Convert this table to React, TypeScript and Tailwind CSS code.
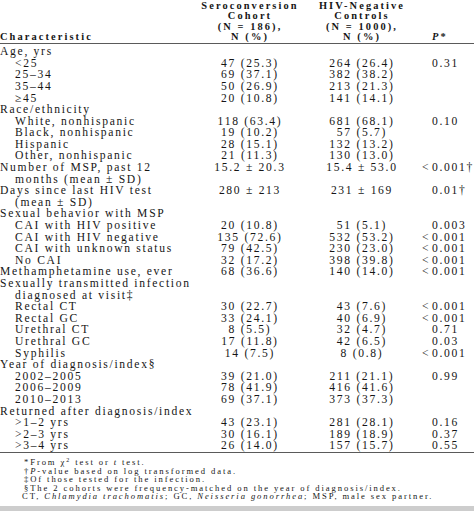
import type { ReactNode } from "react"

type Row = {
  label: ReactNode
  sub?: boolean
  cont?: string
  a?: string
  b?: string
  p?: string
}

const rows: Row[] = [
  { label: "Age, yrs" },
  { label: "<25", sub: true, a: "47 (25.3)", b: "264 (26.4)", p: "0.31" },
  { label: "25–34", sub: true, a: "69 (37.1)", b: "382 (38.2)" },
  { label: "35–44", sub: true, a: "50 (26.9)", b: "213 (21.3)" },
  { label: "≥45", sub: true, a: "20 (10.8)", b: "141 (14.1)" },
  { label: "Race/ethnicity" },
  { label: "White, nonhispanic", sub: true, a: "118 (63.4)", b: "681 (68.1)", p: "0.10" },
  { label: "Black, nonhispanic", sub: true, a: "19 (10.2)", b: "57 (5.7)" },
  { label: "Hispanic", sub: true, a: "28 (15.1)", b: "132 (13.2)" },
  { label: "Other, nonhispanic", sub: true, a: "21 (11.3)", b: "130 (13.0)" },
  {
    label: "Number of MSP, past 12",
    cont: "months (mean ± SD)",
    a: "15.2 ± 20.3",
    b: "15.4 ± 53.0",
    p: "<0.001†",
  },
  { label: "Days since last HIV test", cont: "(mean ± SD)", a: "280 ± 213", b: "231 ± 169", p: "0.01†" },
  { label: "Sexual behavior with MSP" },
  { label: "CAI with HIV positive", sub: true, a: "20 (10.8)", b: "51 (5.1)", p: "0.003" },
  { label: "CAI with HIV negative", sub: true, a: "135 (72.6)", b: "532 (53.2)", p: "<0.001" },
  { label: "CAI with unknown status", sub: true, a: "79 (42.5)", b: "230 (23.0)", p: "<0.001" },
  { label: "No CAI", sub: true, a: "32 (17.2)", b: "398 (39.8)", p: "<0.001" },
  { label: "Methamphetamine use, ever", a: "68 (36.6)", b: "140 (14.0)", p: "<0.001" },
  { label: "Sexually transmitted infection", cont: "diagnosed at visit‡" },
  { label: "Rectal CT", sub: true, a: "30 (22.7)", b: "43 (7.6)", p: "<0.001" },
  { label: "Rectal GC", sub: true, a: "33 (24.1)", b: "40 (6.9)", p: "<0.001" },
  { label: "Urethral CT", sub: true, a: "8 (5.5)", b: "32 (4.7)", p: "0.71" },
  { label: "Urethral GC", sub: true, a: "17 (11.8)", b: "42 (6.5)", p: "0.03" },
  { label: "Syphilis", sub: true, a: "14 (7.5)", b: "8 (0.8)", p: "<0.001" },
  { label: "Year of diagnosis/index§" },
  { label: "2002–2005", sub: true, a: "39 (21.0)", b: "211 (21.1)", p: "0.99" },
  { label: "2006–2009", sub: true, a: "78 (41.9)", b: "416 (41.6)" },
  { label: "2010–2013", sub: true, a: "69 (37.1)", b: "373 (37.3)" },
  { label: "Returned after diagnosis/index" },
  { label: ">1–2 yrs", sub: true, a: "43 (23.1)", b: "281 (28.1)", p: "0.16" },
  { label: ">2–3 yrs", sub: true, a: "30 (16.1)", b: "189 (18.9)", p: "0.37" },
  { label: ">3–4 yrs", sub: true, a: "26 (14.0)", b: "157 (15.7)", p: "0.55" },
]

function PValue({ value }: { value?: string }) {
  if (!value) return null
  if (value.startsWith("<")) {
    // the "<" hangs left so the decimals line up
    return (
      <span>
        <span className="-ml-[10px] inline-block w-[10px]">&lt;</span>
        {value.slice(1)}
      </span>
    )
  }
  return <span>{value}</span>
}

export default function App() {
  return (
    <div
      className="h-[517px] w-[474px] overflow-hidden bg-white text-[#161616]"
      style={{ fontFamily: '"Liberation Serif", "Times New Roman", serif' }}
    >
      {/* Header */}
      <div className="grid grid-cols-[195px_110px_114px_55px] items-end border-b border-[#5a5a5a] pt-px text-[10.4px] font-bold leading-[10.4px] tracking-[2.1px]">
        <div>Characteristic</div>
        <div className="text-center">
          <div>Seroconversion</div>
          <div>Cohort</div>
          <div>(N = 186),</div>
          <div>N (%)</div>
        </div>
        <div className="text-center">
          <div>HIV-Negative</div>
          <div>Controls</div>
          <div>(N = 1000),</div>
          <div>N (%)</div>
        </div>
        <div className="pl-[13px] italic">
          P<span className="not-italic">*</span>
        </div>
      </div>

      {/* Body */}
      <div className="border-b border-[#5a5a5a] pt-[2.5px] text-[11.6px] leading-[11.6px] tracking-[1.7px]">
        {rows.map((row, i) => (
          <div key={i} className="grid grid-cols-[195px_110px_114px_55px] items-start">
            <div className="whitespace-nowrap">
              <div className={row.sub ? "pl-[15px]" : ""}>{row.label}</div>
              {row.cont && <div className="pl-[15px]">{row.cont}</div>}
            </div>
            <div className="text-center whitespace-nowrap">{row.a}</div>
            <div className="text-center whitespace-nowrap">{row.b}</div>
            <div className="pl-[13px] whitespace-nowrap">
              <PValue value={row.p} />
            </div>
          </div>
        ))}
      </div>

      {/* Footnotes */}
      <div className="pl-[24px] pt-[5px] text-[8.6px] leading-[8.6px] tracking-[1.9px] whitespace-nowrap">
        <div>
          *From χ<sup className="text-[6px]">2</sup> test or <span className="italic">t</span> test.
        </div>
        <div>
          †<span className="italic">P</span>-value based on log transformed data.
        </div>
        <div>‡Of those tested for the infection.</div>
        <div>§The 2 cohorts were frequency-matched on the year of diagnosis/index.</div>
        <div className="-ml-[2px]">
          CT, <span className="italic">Chlamydia trachomatis</span>; GC,{" "}
          <span className="italic">Neisseria gonorrhea</span>; MSP, male sex partner.
        </div>
      </div>
      <div className="mt-[5px] h-[5px] bg-[#cdcdcd]" />
    </div>
  )
}
